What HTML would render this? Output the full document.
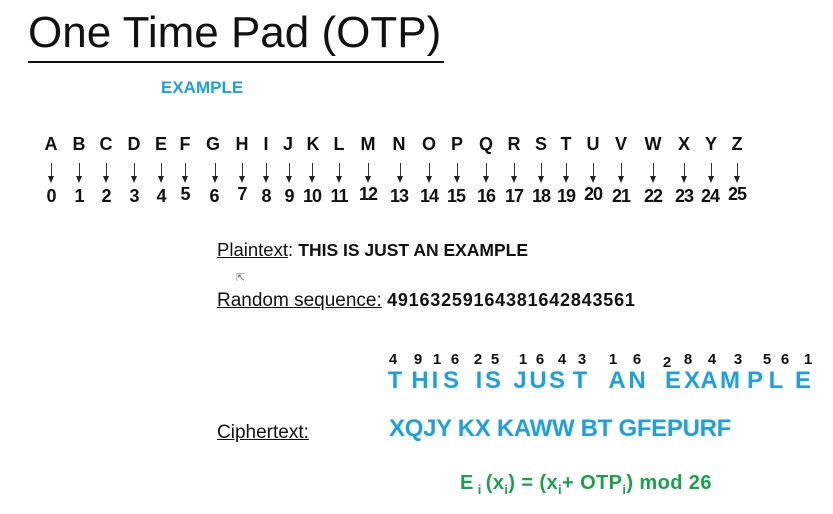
<!DOCTYPE html>
<html><head><meta charset="utf-8"><style>
body{margin:0;width:833px;height:514px;background:#fff;position:relative;overflow:hidden;font-family:"Liberation Sans",sans-serif;}
.a{position:absolute;white-space:nowrap;}
.c{position:absolute;transform:translateX(-50%);font-weight:bold;white-space:nowrap;}
.L{top:134px;font-size:18px;color:#111;}
.N{top:186px;font-size:18px;color:#111;letter-spacing:-1px;}
.ar{position:absolute;top:163px;width:1px;height:14px;background:#333;}
.ar:after{content:"";position:absolute;left:-3px;top:13px;border-left:3.5px solid transparent;border-right:3.5px solid transparent;border-top:7px solid #222;}
.B{top:367px;font-size:24px;color:#1ba1e2;}
.S{top:351px;font-size:15px;color:#111;}
</style></head><body>
<div class="a" style="left:28px;top:8px;font-size:44px;color:#111;">One Time Pad (OTP)</div>
<div class="a" style="left:28px;top:61px;width:416px;height:2px;background:#111;"></div>
<div class="a" style="left:161px;top:78px;font-size:17px;font-weight:bold;color:#1ba1e2;">EXAMPLE</div>

<div class="c L" style="left:51px">A</div><div class="c L" style="left:79px">B</div><div class="c L" style="left:106px">C</div><div class="c L" style="left:134px">D</div><div class="c L" style="left:161px">E</div><div class="c L" style="left:185px">F</div><div class="c L" style="left:213px">G</div><div class="c L" style="left:242px">H</div><div class="c L" style="left:266px">I</div><div class="c L" style="left:288px">J</div><div class="c L" style="left:313px">K</div><div class="c L" style="left:339px">L</div><div class="c L" style="left:368px">M</div><div class="c L" style="left:399px">N</div><div class="c L" style="left:429px">O</div><div class="c L" style="left:457px">P</div><div class="c L" style="left:486px">Q</div><div class="c L" style="left:514px">R</div><div class="c L" style="left:541px">S</div><div class="c L" style="left:566px">T</div><div class="c L" style="left:593px">U</div><div class="c L" style="left:621px">V</div><div class="c L" style="left:653px">W</div><div class="c L" style="left:684px">X</div><div class="c L" style="left:711px">Y</div><div class="c L" style="left:737px">Z</div>

<div class="ar" style="left:51px"></div><div class="ar" style="left:79px"></div><div class="ar" style="left:106px"></div><div class="ar" style="left:134px"></div><div class="ar" style="left:161px"></div><div class="ar" style="left:185px"></div><div class="ar" style="left:215px"></div><div class="ar" style="left:242px"></div><div class="ar" style="left:266px"></div><div class="ar" style="left:289px"></div><div class="ar" style="left:312px"></div><div class="ar" style="left:339px"></div><div class="ar" style="left:368px"></div><div class="ar" style="left:400px"></div><div class="ar" style="left:429px"></div><div class="ar" style="left:457px"></div><div class="ar" style="left:486px"></div><div class="ar" style="left:514px"></div><div class="ar" style="left:541px"></div><div class="ar" style="left:566px"></div><div class="ar" style="left:593px"></div><div class="ar" style="left:621px"></div><div class="ar" style="left:653px"></div><div class="ar" style="left:684px"></div><div class="ar" style="left:711px"></div><div class="ar" style="left:737px"></div>

<div class="c N" style="left:51px">0</div><div class="c N" style="left:79px">1</div><div class="c N" style="left:106px">2</div><div class="c N" style="left:134px">3</div><div class="c N" style="left:161px">4</div><div class="c N" style="left:185px;top:184px">5</div><div class="c N" style="left:214px">6</div><div class="c N" style="left:242px;top:184px">7</div><div class="c N" style="left:266px">8</div><div class="c N" style="left:289px">9</div><div class="c N" style="left:312px">10</div><div class="c N" style="left:339px">11</div><div class="c N" style="left:368px;top:184px">12</div><div class="c N" style="left:399px">13</div><div class="c N" style="left:429px">14</div><div class="c N" style="left:456px">15</div><div class="c N" style="left:486px">16</div><div class="c N" style="left:514px">17</div><div class="c N" style="left:541px">18</div><div class="c N" style="left:566px">19</div><div class="c N" style="left:593px;top:184px">20</div><div class="c N" style="left:621px">21</div><div class="c N" style="left:653px">22</div><div class="c N" style="left:684px">23</div><div class="c N" style="left:710px">24</div><div class="c N" style="left:737px;top:184px">25</div>

<div class="a" style="left:217px;top:239px;font-size:18.5px;color:#111;"><u>Plaintext</u>: <b style="font-size:17.5px">THIS IS JUST AN EXAMPLE</b></div>
<div class="a" style="left:236px;top:271px;font-size:11px;color:#777;">&#8689;</div>
<div class="a" style="left:217px;top:290px;font-size:19px;color:#111;"><u>Random sequence:</u> <b style="font-size:18px;letter-spacing:0.8px">49163259164381642843561</b></div>

<div class="c S" style="left:393px">4</div><div class="c S" style="left:418px">9</div><div class="c S" style="left:437px">1</div><div class="c S" style="left:455px">6</div><div class="c S" style="left:478px">2</div><div class="c S" style="left:495px">5</div><div class="c S" style="left:523px">1</div><div class="c S" style="left:540px">6</div><div class="c S" style="left:562px">4</div><div class="c S" style="left:582px">3</div><div class="c S" style="left:613px">1</div><div class="c S" style="left:637px">6</div><div class="c S" style="left:667px;top:354px">2</div><div class="c S" style="left:688px">8</div><div class="c S" style="left:712px">4</div><div class="c S" style="left:738px">3</div><div class="c S" style="left:767px">5</div><div class="c S" style="left:785px">6</div><div class="c S" style="left:808px">1</div>

<div class="c B" style="left:395px">T</div><div class="c B" style="left:420px">H</div><div class="c B" style="left:435px">I</div><div class="c B" style="left:451px">S</div><div class="c B" style="left:479px">I</div><div class="c B" style="left:493px">S</div><div class="c B" style="left:520px">J</div><div class="c B" style="left:538px">U</div><div class="c B" style="left:557px">S</div><div class="c B" style="left:580px">T</div><div class="c B" style="left:617px">A</div><div class="c B" style="left:637px">N</div><div class="c B" style="left:673px">E</div><div class="c B" style="left:692px">X</div><div class="c B" style="left:709px">A</div><div class="c B" style="left:730px">M</div><div class="c B" style="left:755px">P</div><div class="c B" style="left:776px">L</div><div class="c B" style="left:803px">E</div>

<div class="a" style="left:217px;top:422px;font-size:19px;color:#111;"><u>Ciphertext:</u></div>
<div class="a" style="left:389px;top:415px;font-size:24px;font-weight:bold;color:#1ba1e2;letter-spacing:-0.3px;">XQJY KX KAWW BT GFEPURF</div>
<div class="a" style="left:460px;top:472px;font-size:20px;font-weight:bold;color:#16a34a;letter-spacing:0.4px;">E<sub style="font-size:13px;margin:0 4px">i</sub>(x<sub style="font-size:13px">i</sub>) = (x<sub style="font-size:13px">i</sub>+ OTP<sub style="font-size:13px">i</sub>) mod 26</div>
</body></html>
